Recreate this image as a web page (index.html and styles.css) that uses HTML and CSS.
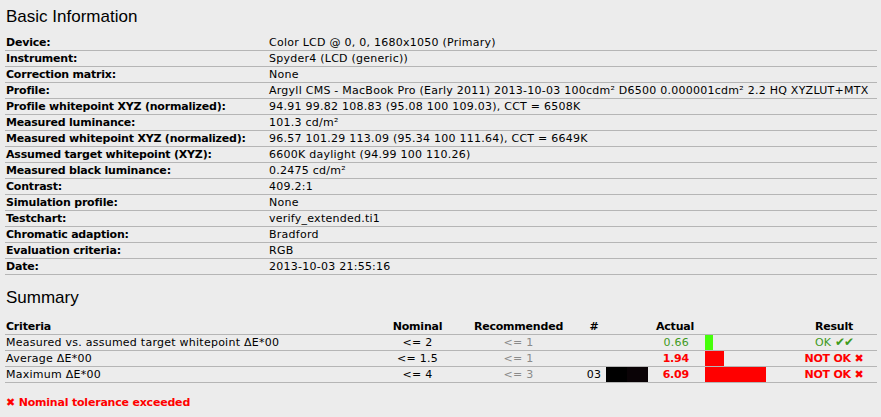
FILE: index.html
```html
<!DOCTYPE html>
<html>
<head>
<meta charset="utf-8">
<link rel="stylesheet" href="styles.css">
</head>
<body>
<div class="report">
  <h2 class="title">Basic Information</h2>
  <table class="info">
    <colgroup><col class="c-label"><col></colgroup>
    <tr><th>Device:</th><td>Color LCD @ 0, 0, 1680x1050 (Primary)</td></tr>
    <tr><th>Instrument:</th><td>Spyder4 (LCD (generic))</td></tr>
    <tr><th>Correction matrix:</th><td>None</td></tr>
    <tr><th>Profile:</th><td>Argyll CMS - MacBook Pro (Early 2011) 2013-10-03 100cdm² D6500 0.000001cdm² 2.2 HQ XYZLUT+MTX</td></tr>
    <tr><th>Profile whitepoint XYZ (normalized):</th><td>94.91 99.82 108.83 (95.08 100 109.03), CCT = 6508K</td></tr>
    <tr><th>Measured luminance:</th><td>101.3 cd/m²</td></tr>
    <tr><th>Measured whitepoint XYZ (normalized):</th><td>96.57 101.29 113.09 (95.34 100 111.64), CCT = 6649K</td></tr>
    <tr><th>Assumed target whitepoint (XYZ):</th><td>6600K daylight (94.99 100 110.26)</td></tr>
    <tr><th>Measured black luminance:</th><td>0.2475 cd/m²</td></tr>
    <tr><th>Contrast:</th><td>409.2:1</td></tr>
    <tr><th>Simulation profile:</th><td>None</td></tr>
    <tr><th>Testchart:</th><td>verify_extended.ti1</td></tr>
    <tr><th>Chromatic adaption:</th><td>Bradford</td></tr>
    <tr><th>Evaluation criteria:</th><td>RGB</td></tr>
    <tr><th>Date:</th><td>2013-10-03 21:55:16</td></tr>
  </table>

  <h2 class="title summary-title">Summary</h2>
  <table class="summary">
    <colgroup>
      <col class="s-crit"><col class="s-nom"><col class="s-rec"><col class="s-num"><col class="s-sw"><col class="s-act"><col class="s-bar"><col class="s-res">
    </colgroup>
    <tr class="head">
      <th class="left">Criteria</th><th>Nominal</th><th>Recommended</th><th>#</th><th></th><th>Actual</th><th></th><th>Result</th>
    </tr>
    <tr>
      <td class="left">Measured vs. assumed target whitepoint ΔE*00</td>
      <td class="center">&lt;= 2</td>
      <td class="center rec">&lt;= 1</td>
      <td></td><td></td>
      <td class="actual ok">0.66</td>
      <td class="barcell"><div class="bar bar-ok" style="width:8px"></div></td>
      <td class="center ok">OK <span class="ticks">✔✔</span></td>
    </tr>
    <tr>
      <td class="left">Average ΔE*00</td>
      <td class="center">&lt;= 1.5</td>
      <td class="center rec">&lt;= 1</td>
      <td></td><td></td>
      <td class="actual bad">1.94</td>
      <td class="barcell"><div class="bar bar-bad" style="width:19px"></div></td>
      <td class="center bad">NOT OK <span class="cross">✖</span></td>
    </tr>
    <tr>
      <td class="left">Maximum ΔE*00</td>
      <td class="center">&lt;= 4</td>
      <td class="center rec">&lt;= 3</td>
      <td class="center">03</td>
      <td class="swcell"><div class="swatch"><span class="sw-a"></span><span class="sw-b"></span></div></td>
      <td class="actual bad">6.09</td>
      <td class="barcell"><div class="bar bar-bad" style="width:61px"></div></td>
      <td class="center bad">NOT OK <span class="cross">✖</span></td>
    </tr>
  </table>

  <p class="note"><span class="cross">✖</span> Nominal tolerance exceeded</p>
</div>
</body>
</html>
```

FILE: styles.css
```css
html, body {
  margin: 0;
  padding: 0;
  background: #ececec;
}
body {
  font-family: "DejaVu Sans", Verdana, sans-serif;
  font-size: 11px;
  letter-spacing: 0.25px;
  color: #000;
}
.report {
  padding: 0 4px 0 5px;
}
.title {
  font-family: "Liberation Sans", Arial, sans-serif;
  font-weight: normal;
  font-size: 17px;
  letter-spacing: 0;
  line-height: 20px;
  margin: 0;
  padding: 7px 0 0 1px;
  height: 28px;
}
.summary-title {
  padding-top: 13px;
  height: 31px;
}
table {
  border-collapse: collapse;
  width: 872px;
  table-layout: fixed;
}
th, td {
  height: 15px;
  line-height: 15px;
  padding: 0 0 0 1px;
  border-bottom: 1px solid #b5b5b5;
  white-space: nowrap;
  overflow: hidden;
  vertical-align: middle;
}
th, .bad, .note {
  letter-spacing: -0.2px;
}
.info th {
  text-align: left;
  font-weight: bold;
}
.c-label { width: 263px; }

.s-crit { width: 375px; }
.s-nom { width: 74px; }
.s-rec { width: 128px; }
.s-num { width: 23px; }
.s-sw { width: 44px; }
.s-act { width: 51px; }
.s-bar { width: 90px; }
.s-res { width: 87px; }

.summary th {
  font-weight: bold;
  text-align: center;
}
.summary .left { text-align: left; }
.center { text-align: center; }
.rec { color: #8a8a8a; }
.actual {
  text-align: right;
  padding-right: 11px;
}
.ok { color: #3e9a1c; }
.bad { color: #ff0000; font-weight: bold; }
.ticks { font-weight: bold; font-size: 12px; letter-spacing: -1px; }
.barcell { padding-left: 5px; }
.bar { height: 15px; }
.bar-ok { background: #46ff0a; }
.bar-bad { background: #ff0000; }
.swcell { padding: 0 1px; }
.swatch {
  display: flex;
  height: 15px;
}
.sw-a { flex: 1; background: #000; }
.sw-b { flex: 1; background: #0a0306; }
.note {
  margin: 12px 0 0 1px;
  color: #ff0000;
  font-weight: bold;
  line-height: 15px;
}
```
